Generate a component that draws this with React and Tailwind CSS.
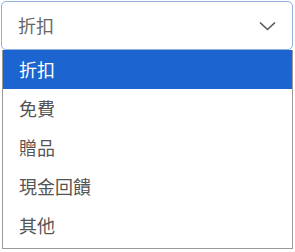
const options = ["折扣", "免費", "贈品", "現金回饋", "其他"];

export default function App() {
  return (
    <div
      className="w-[295px] h-[252px] bg-white"
      style={{ fontFamily: '"Noto Sans CJK TC", "Noto Sans", sans-serif' }}
    >
      <div className="pt-[1px] pl-[1px] w-[293px]">
        <div className="h-[49px] rounded-[5px] border border-[#8fb0dc] flex items-center justify-between pl-[16px] pr-[16px]">
          <span className="text-[18px] text-[#666]">折扣</span>
          <svg width="17" height="10" viewBox="0 0 17 10" fill="none">
            <polyline points="1,1.5 8.5,8.5 16,1.5" stroke="#555" strokeWidth="1.6" />
          </svg>
        </div>
        <ul className="ml-[1px] w-[291px] border border-t-0 border-[#999] h-[199px]">
          {options.map((o, i) => (
            <li
              key={o}
              className={`h-[39px] flex items-center pl-[16px] text-[18px] ${
                i === 0 ? "bg-[#1c64d0] text-white" : "text-[#555]"
              }`}
            >
              {o}
            </li>
          ))}
        </ul>
      </div>
    </div>
  );
}
